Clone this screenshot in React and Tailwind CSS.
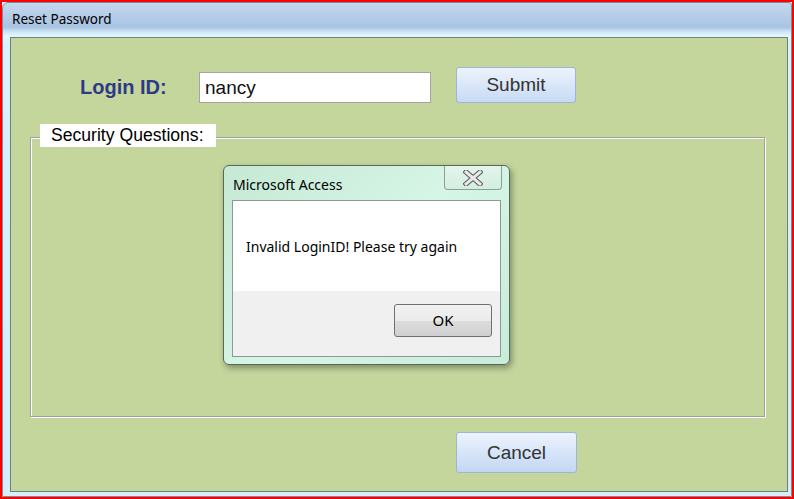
export default function App() {
  return (
    <div className="w-[794px] h-[499px] border-2 border-[#ff0000] bg-white overflow-hidden relative" style={{ fontFamily: '"Liberation Sans", Arial, sans-serif' }}>
      <div className="w-full h-full border border-[#7d8b96] rounded-tl-[6px] rounded-tr-[3px] flex flex-col bg-[linear-gradient(180deg,#c4d8ee_0px,#b4cce8_14px,#a9c4e3_24px,#d0e6f6_29px,#e4f7fd_33px,#d8f1fa_40px,#d4eff9_100%)]">
        <div className="h-[34px] pl-[9px] pt-[10px] text-[13.5px] text-black leading-none" style={{ fontFamily: '"Noto Sans", sans-serif' }}>
          Reset Password
        </div>
        <div className="ml-[7px] mr-[3px] mb-[4px] flex-1 border border-[#6f7e80] bg-[#c4d69c] flex flex-col">
          <div className="flex mt-[29px]">
            <div className="ml-[69px] w-[119px] h-[36px] flex items-center text-[20px] font-bold text-[#2e3a88] leading-none pt-[3px]">
              Login ID:
            </div>
            <div className="mt-[5px] w-[232px] h-[31px] bg-white border border-[#a5a5a5] flex items-center pl-[5px] text-[19px] text-[#111] leading-none">
              nancy
            </div>
            <div className="ml-[25px] w-[120px] h-[36px] rounded-[3px] border border-[#9cb5d8] bg-[linear-gradient(180deg,#edf3fd,#c7daf4)] flex items-center justify-center text-[19px] text-[#333] leading-none pb-[2px]">
              Submit
            </div>
          </div>
          <div className="relative ml-[19px] mt-[21px] w-[735px]">
            <div className="mt-[13px] h-[280px] border border-[#a0a0a0] shadow-[inset_1px_1px_0_#ffffff,1px_1px_0_#ffffff]"></div>
            <div className="absolute left-[10px] top-0 h-[23px] bg-white pl-[11px] pr-[12px] flex items-center text-[17.6px] text-black leading-none">
              Security Questions:
            </div>
          </div>
          <div className="ml-[445px] mt-[15px] w-[121px] h-[41px] rounded-[3px] border border-[#9cb5d8] bg-[linear-gradient(180deg,#edf3fd,#c2d6f3)] flex items-center justify-center text-[19px] text-[#333] leading-none">
            Cancel
          </div>
        </div>
      </div>

      <div className="absolute left-[221px] top-[163px] w-[287px] h-[200px] rounded-[6px] border border-[#55695e] bg-[linear-gradient(135deg,#c5e9d4,#d6f5e6_50%,#c9ecd9)] shadow-[2px_3px_6px_rgba(0,0,0,0.35)] flex flex-col" style={{ fontFamily: '"Noto Sans", sans-serif' }}>
        <div className="flex h-[34px]">
          <div className="pl-[9px] pt-[12px] text-[14px] text-black leading-none flex-1">Microsoft Access</div>
          <div className="mr-[7px] w-[58px] h-[24px] border border-t-0 border-[#8d9e95] rounded-b-[4px] bg-[linear-gradient(180deg,#e4f5ec,#d2eedf)] flex items-center justify-center">
            <svg width="20" height="16" viewBox="0 0 20 16">
              <path d="M3 2 L17 14 M17 2 L3 14" stroke="#555" strokeWidth="5" strokeLinecap="square" />
              <path d="M3 2 L17 14 M17 2 L3 14" stroke="#e8e8e8" strokeWidth="3" strokeLinecap="square" />
            </svg>
          </div>
        </div>
        <div className="mx-[8px] h-[157px] border border-[#8a9a98] flex flex-col">
          <div className="h-[90px] bg-white pl-[13px] pt-[39px] text-[14px] text-black leading-none">
            Invalid LoginID! Please try again
          </div>
          <div className="flex-1 bg-[#f0f0f0] flex justify-end pr-[8px] pt-[13px]">
            <div className="w-[98px] h-[33px] rounded-[3px] border border-[#707070] bg-[linear-gradient(180deg,#f2f2f2_0%,#ebebeb_50%,#dddddd_50%,#cfcfcf_100%)] flex items-center justify-center text-[15px] text-black leading-none">
              OK
            </div>
          </div>
        </div>
      </div>
    </div>
  );
}
